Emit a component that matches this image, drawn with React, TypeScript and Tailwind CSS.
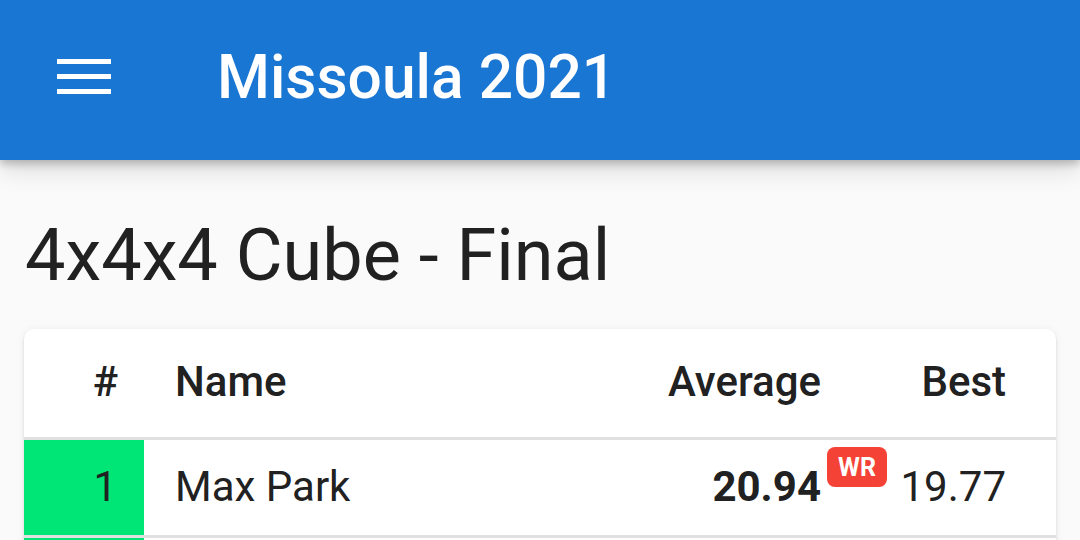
type Result = { id: number; rank: string; name: string; average: string; best: string; record?: string }

const RESULTS: Result[] = [
  { id: 1, rank: '1', name: 'Max Park', average: '20.94', best: '19.77', record: 'WR' },
  // next row only peeks in at the bottom edge
  { id: 2, rank: '', name: '', average: '', best: '' },
]

export default function App() {
  return (
    <div className="h-[540px] w-[1080px] overflow-hidden bg-[#fafafa] font-['Roboto',sans-serif] text-[#212121]">
      {/* app bar */}
      <header className="relative z-10 flex h-[160px] items-center bg-[#1976d2] shadow-[0_4px_8px_rgba(0,0,0,0.22),0_10px_24px_rgba(0,0,0,0.12)]">
        <div className="mb-[7px] ml-[57px] flex flex-col gap-[10px]">
          <span className="block h-[5px] w-[54px] bg-white" />
          <span className="block h-[5px] w-[54px] bg-white" />
          <span className="block h-[5px] w-[54px] bg-white" />
        </div>
        <h1 className="mb-[3px] ml-[106px] text-[60.5px] leading-none font-medium text-white">Missoula 2021</h1>
      </header>

      <main className="px-[24px]">
        <h2 className="mt-[60px] ml-px text-[72px] leading-none font-normal">4x4x4 Cube - Final</h2>

        {/* results table */}
        <div className="mt-[37px] w-[1032px] overflow-hidden rounded-[10px] bg-white shadow-[0_2px_3px_rgba(0,0,0,0.12),0_1px_10px_rgba(0,0,0,0.06)]">
          <div className="flex h-[111px] items-center border-b-[3px] border-[#e0e0e0] pb-[3px] text-[42px] leading-none font-medium">
            <div className="w-[120px] pr-[26px] text-right">#</div>
            <div className="flex-1 pl-[31px]">Name</div>
            <div className="w-[240px] text-right">Average</div>
            <div className="w-[235px] pr-[50px] text-right">Best</div>
          </div>
          {RESULTS.map((r) => (
            <div key={r.id} className="flex h-[98px] border-b-[3px] border-[#e0e0e0] text-[42px] leading-none">
              <div className="flex w-[120px] items-center justify-end bg-[#00e676] pr-[27px] pb-[2px]">{r.rank}</div>
              <div className="flex flex-1 items-center pb-[2px] pl-[31px]">{r.name}</div>
              <div className="relative flex w-[240px] items-center justify-end pb-[2px] font-bold">
                {r.average}
                {r.record && (
                  <span className="absolute top-[7px] left-[calc(100%+6px)] flex h-[40px] w-[60px] items-center justify-center rounded-[8px] bg-[#f44336] text-[25px] font-bold text-white">
                    {r.record}
                  </span>
                )}
              </div>
              <div className="flex w-[235px] items-center justify-end pr-[50px] pb-[2px]">{r.best}</div>
            </div>
          ))}
        </div>
      </main>
    </div>
  )
}
